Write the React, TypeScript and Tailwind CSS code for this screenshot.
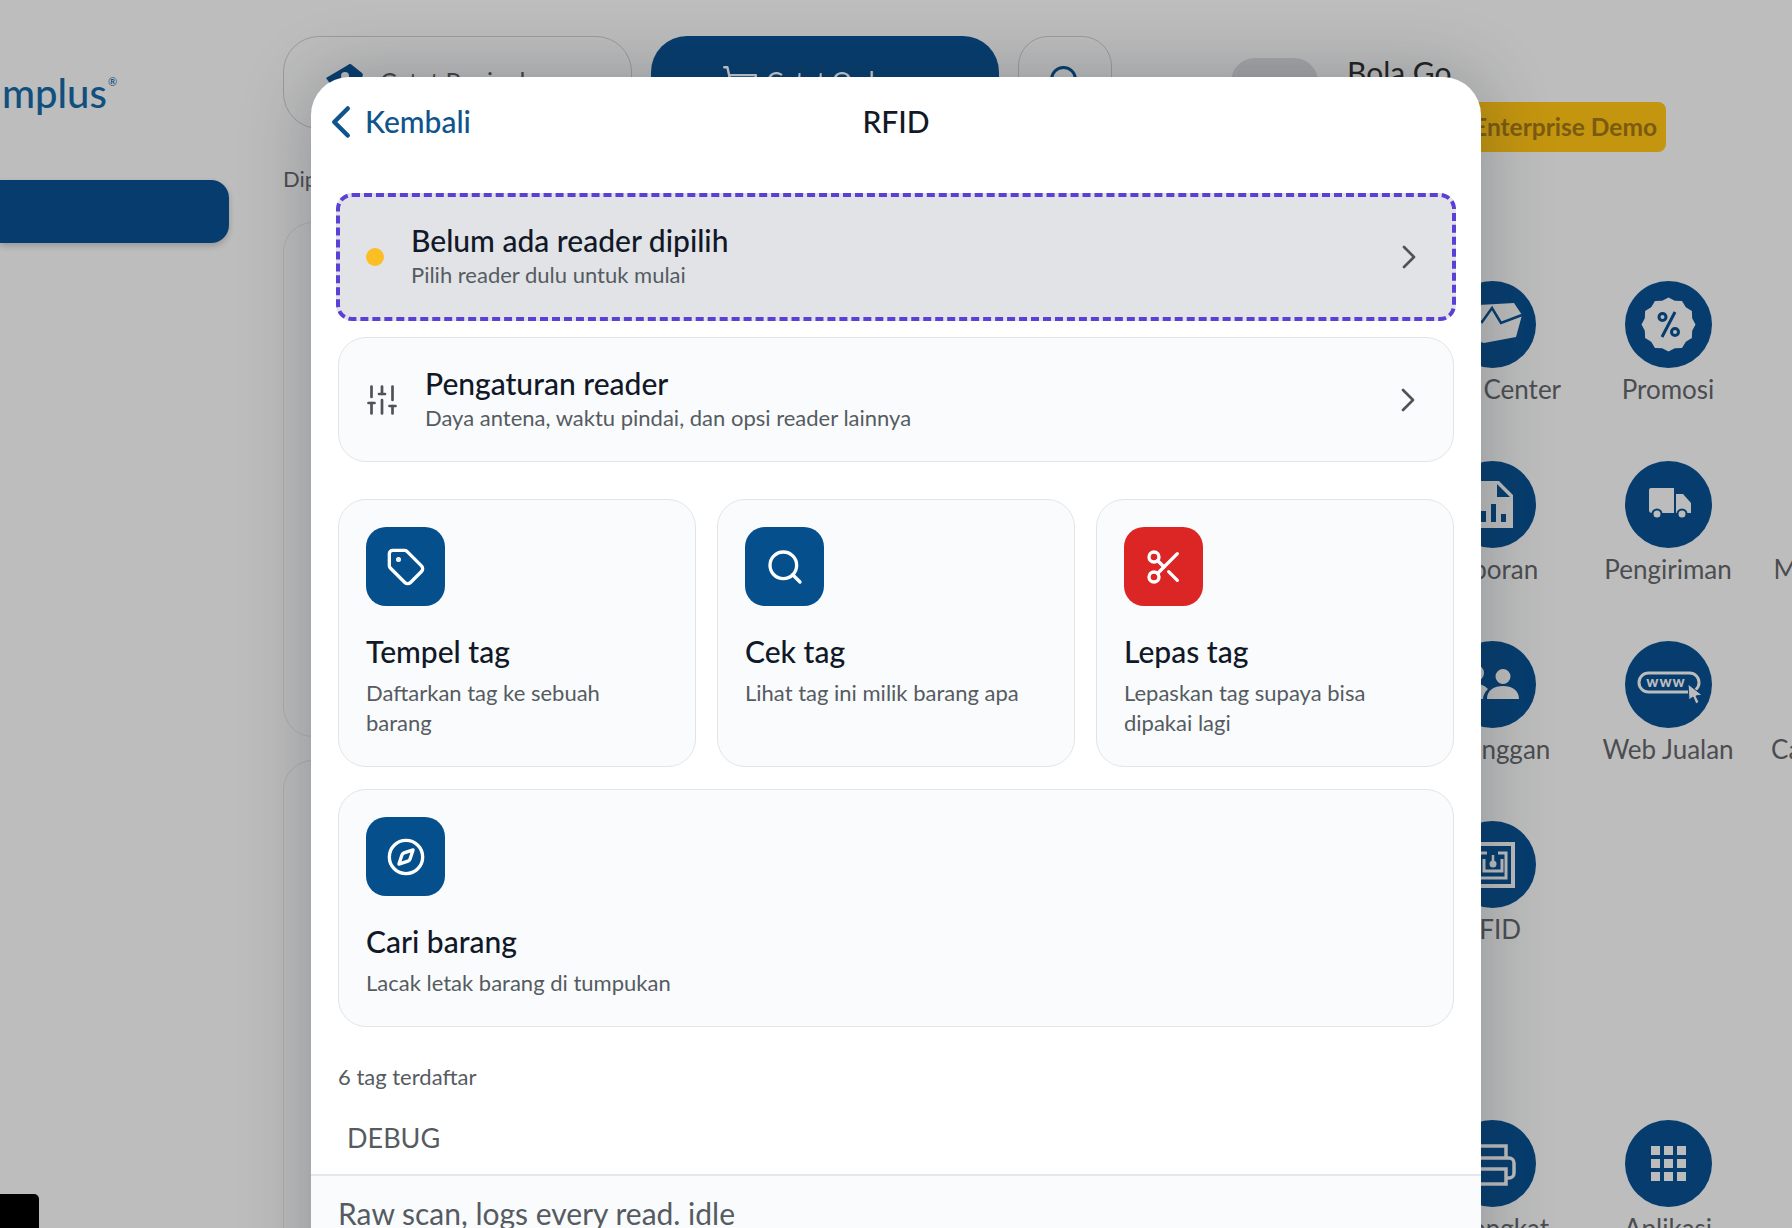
import { ChevronLeft, ChevronRight, Compass, Scissors, Search, ShoppingCart, SlidersVertical, Tag } from 'lucide-react'
import type { ReactNode } from 'react'

const badgePoints = Array.from({ length: 24 }, (_, i) => {
  const r = i % 2 ? 24.5 : 27
  const a = (i / 24) * Math.PI * 2
  return `${43.5 + r * Math.cos(a)},${43.5 + r * Math.sin(a)}`
}).join(' ')

function Disc({ children }: { children?: ReactNode }) {
  return (
    <svg viewBox="0 0 87 87" className="h-[87px] w-[87px] shrink-0">
      <circle cx="43.5" cy="43.5" r="43.5" fill="#063d6e" />
      {children}
    </svg>
  )
}

const ICONS: Record<string, ReactNode> = {
  center: (
    <>
      <path d="M12 25l53-3 8 12-6 22-32 6-21-6z" fill="#bcbcbc" />
      <path d="M10 34l23 7 10-14 9 15 21-8" fill="none" stroke="#063d6e" strokeWidth="2.5" />
    </>
  ),
  promo: (
    <>
      <polygon points={badgePoints} fill="#bcbcbc" />
      <circle cx="37.5" cy="36" r="3.5" fill="none" stroke="#063d6e" strokeWidth="3" />
      <circle cx="50" cy="51" r="3.5" fill="none" stroke="#063d6e" strokeWidth="3" />
      <path d="M50 31L37 56" stroke="#063d6e" strokeWidth="3" />
    </>
  ),
  report: (
    <path
      d="M22 20h28l14 14v33H22zM32 50v11h5V50zM42 43v18h5V43zM52 53v8h5v-8zM48 23v13h13z"
      fill="#bcbcbc"
      fillRule="evenodd"
    />
  ),
  truck: (
    <>
      <path d="M24 29a2 2 0 012-2h23v25H27a3 3 0 01-3-3zM51 33h7l8 9v10H51z" fill="#bcbcbc" />
      <circle cx="32" cy="53" r="4.500" fill="#bcbcbc" stroke="#063d6e" strokeWidth="2" />
      <circle cx="57" cy="53" r="4.500" fill="#bcbcbc" stroke="#063d6e" strokeWidth="2" />
    </>
  ),
  users: (
    <path
      d="M27 24a8 8 0 110 16 8 8 0 010-16zM54 28a7.500 7.500 0 110 15 7.500 7.500 0 010-15zM12 58c0-10 6-15 15-15 6 0 9 2 12 5-3 3-5 6-5 10zM38 58c0-9 7-13 16-13s16 4 16 13z"
      fill="#bcbcbc"
    />
  ),
  web: (
    <>
      <rect x="14" y="32" width="60" height="19" rx="9.500" fill="none" stroke="#bcbcbc" strokeWidth="3" />
      <text x="41" y="46" textAnchor="middle" fontSize="15" fontWeight="900" letterSpacing="1" fill="#bcbcbc" fontFamily="Lato, sans-serif">
        www
      </text>
      <path d="M63 43l14 11-6 1 3 6-3 2-3-7-4 3z" fill="#bcbcbc" stroke="#063d6e" strokeWidth="1" />
    </>
  ),
  rfid: (
    <>
      <rect x="17" y="23" width="47" height="42" fill="none" stroke="#bcbcbc" strokeWidth="4" />
      <path d="M38 32H24v25h33V32H49" fill="none" stroke="#bcbcbc" strokeWidth="3" />
      <path d="M35 38v12h18V38" fill="none" stroke="#bcbcbc" strokeWidth="3" />
      <circle cx="44" cy="43" r="3.500" fill="#bcbcbc" />
      <path d="M44 34v8" stroke="#bcbcbc" strokeWidth="2.500" />
    </>
  ),
  print: (
    <g fill="none" stroke="#bcbcbc" strokeWidth="3.500">
      <path d="M28 38V26h29v12" />
      <path d="M28 58h-7a5 5 0 01-5-5V43a5 5 0 015-5h39a5 5 0 015 5v10a5 5 0 01-5 5h-3" />
      <rect x="28" y="49" width="29" height="15" />
    </g>
  ),
  grid: (
    <path
      d="M26 26h9v9h-9zM39 26h9v9h-9zM52 26h9v9h-9zM26 39h9v9h-9zM39 39h9v9h-9zM52 39h9v9h-9zM26 52h9v9h-9zM39 52h9v9h-9zM52 52h9v9h-9z"
      fill="#bcbcbc"
    />
  ),
}

const APP_ROWS = [
  [
    { label: 'Help Center', icon: 'center' },
    { label: 'Promosi', icon: 'promo' },
    { label: '', icon: '' },
  ],
  [
    { label: 'Laporan', icon: 'report' },
    { label: 'Pengiriman', icon: 'truck' },
    { label: 'Marketplace', icon: '' },
  ],
  [
    { label: 'Pelanggan', icon: 'users' },
    { label: 'Web Jualan', icon: 'web' },
    { label: 'Cabang Toko', icon: '' },
  ],
  [
    { label: 'RFID', icon: 'rfid' },
    { label: '', icon: '' },
    { label: '', icon: '' },
  ],
]

const TOOL_CARDS = [
  { title: 'Tempel tag', desc: 'Daftarkan tag ke sebuah barang', icon: Tag, tile: 'bg-[#05508c]' },
  { title: 'Cek tag', desc: 'Lihat tag ini milik barang apa', icon: Search, tile: 'bg-[#05508c]' },
  { title: 'Lepas tag', desc: 'Lepaskan tag supaya bisa dipakai lagi', icon: Scissors, tile: 'bg-[#dc2626]' },
]

function AppCell({ label, icon }: { label: string; icon: string }) {
  return (
    <div className="flex w-[176px] shrink-0 flex-col items-center">
      {icon ? <Disc>{ICONS[icon]}</Disc> : <div className="h-[87px]" />}
      <span className="mt-[5px] whitespace-nowrap text-[26px] leading-[32px] text-[#4b4d50]">{label}</span>
    </div>
  )
}

function Backdrop() {
  return (
    <div className="flex h-full w-full">
      <aside className="flex w-[283px] shrink-0 flex-col">
        <div className="mt-[69px] flex h-[48px] items-center pl-[2px] text-[40px] font-medium leading-none text-[#11507e]">
          mplus<sup className="-mt-[12px] ml-[1px] text-[11px]">®</sup>
        </div>
        <div className="mt-[63px] h-[63px] w-[229px] rounded-r-[18px] bg-[#063d6e] shadow-[0_3px_6px_rgba(0,0,0,0.2)]" />
        <div className="mt-auto h-[34px] w-[39px] rounded-tr-[5px] bg-black" />
      </aside>

      <main className="flex w-[829px] shrink-0 flex-col pt-[36px]">
        <div className="flex shrink-0 gap-[19px]">
          <div className="flex h-[93px] w-[349px] items-start gap-[17px] rounded-[36px] border border-[#9b9b9d] pl-[42px] pt-[26px]">
            <svg viewBox="0 0 37 37" className="h-[37px] w-[37px] shrink-0">
              <path d="M0 15L22 2a3 3 0 014 0l10 8a3 3 0 010 4L14 34z" fill="#063d6e" />
              <circle cx="19" cy="13" r="4" fill="#bcbcbc" />
            </svg>
            <span className="pt-[2px] text-[25px] leading-[32px] text-[#444]">Catat Penjual</span>
          </div>
          <div className="flex h-[93px] w-[349px] items-start gap-[8px] rounded-[36px] bg-[#063d6e] pl-[70px] pt-[28px] text-[#c9ced4]">
            <ShoppingCart size={38} strokeWidth={1.5} />
            <span className="text-[25px] leading-[32px]">Catat Order</span>
          </div>
          <div className="flex h-[93px] w-[94px] items-start justify-center rounded-[30px] border border-[#9b9b9d] pt-[26px] text-[#063d6e]">
            <Search size={36} />
          </div>
        </div>
        <p className="mt-[36px] shrink-0 text-[22px] leading-[28px] text-[#4b4d50]">Dipilih</p>
        <div className="mt-[29px] h-[515px] shrink-0 rounded-[30px] border border-[#adadaf]" />
        <div className="mt-[23px] h-[500px] shrink-0 rounded-[30px] border border-[#adadaf]" />
      </main>

      <section className="flex min-w-0 flex-1 flex-col overflow-hidden pl-[119px]">
        <div className="mt-[58px] flex h-[44px] shrink-0 gap-[29px]">
          <div className="h-[80px] w-[87px] rounded-[24px] bg-[#a6a6a8]" />
          <span className="-mt-[4px] whitespace-nowrap text-[30px] leading-[36px] text-[#222]">Bola Go</span>
        </div>
        <div className="flex shrink-0 justify-end pr-[126px]">
          <span className="flex h-[50px] w-[300px] items-center justify-end rounded-[8px] bg-[#c4950f] px-[9px] text-[24.5px] font-bold text-[#7a5b10]">
            Enterprise Demo
          </span>
        </div>
        <div className="ml-[173px] mt-[129px] flex w-[528px] shrink-0 flex-col">
          {APP_ROWS.map((row, i) => (
            <div key={i} className="flex h-[180px] w-[528px] shrink-0">
              {row.map((app, j) => (
                <AppCell key={j} label={app.label} icon={app.icon} />
              ))}
            </div>
          ))}
          <div className="mt-[119px] flex w-[528px] shrink-0">
            <AppCell label="Perangkat" icon="print" />
            <AppCell label="Aplikasi" icon="grid" />
          </div>
        </div>
      </section>
    </div>
  )
}

function ToolCard({ title, desc, icon: Icon, tile, className }: { title: string; desc: string; icon: typeof Tag; tile: string; className: string }) {
  return (
    <div className={`rounded-[28px] border border-[#e2e5e8] bg-[#f9fbfc] px-[27px] pt-[27px] ${className}`}>
      <div className={`flex h-[79px] w-[79px] items-center justify-center rounded-[20px] text-white ${tile}`}>
        <Icon size={40} strokeWidth={2} />
      </div>
      <div className="mt-[27px] text-[30px] font-medium leading-[36px] text-[#111827]">{title}</div>
      <p className="mt-[9px] pr-[20px] text-[22px] leading-[30px] text-[#565b62]">{desc}</p>
    </div>
  )
}

export default function App() {
  return (
    <div className="relative h-[1228px] w-[1792px] overflow-hidden bg-[#bdbdbd] font-['Lato','Liberation_Sans',sans-serif]">
      <Backdrop />

      <div className="absolute left-[311px] top-[77px] h-[1250px] w-[1170px] rounded-t-[38px] bg-white shadow-[0_0_70px_rgba(30,35,45,0.28)]">
        <header className="relative flex h-[90px] items-center justify-center">
          <span className="absolute left-[3px] flex items-center text-[30px] font-medium text-[#0f548c]">
            <ChevronLeft size={54} strokeWidth={2} />
            <span className="-ml-[3px] -mt-[2px]">Kembali</span>
          </span>
          <h1 className="-mt-[2px] text-[30px] font-medium text-[#111827]">RFID</h1>
        </header>

        <div className="mt-[26px] flex flex-col px-[27px]">
          <button
            type="button"
            className="-mx-[2px] flex h-[128px] items-center rounded-[16px] border-[4px] border-dashed border-[#5b3fd6] bg-[#e1e3e6] pl-[26px] pr-[23px] text-left"
          >
            <span className="h-[18px] w-[18px] rounded-full bg-[#fbbf24]" />
            <span className="ml-[27px] flex-1 pb-[2px]">
              <span className="mb-[2px] block text-[30px] font-medium leading-[36px] text-[#111827]">Belum ada reader dipilih</span>
              <span className="block text-[22px] leading-[30px] text-[#565b62]">Pilih reader dulu untuk mulai</span>
            </span>
            <ChevronRight size={40} strokeWidth={1.6} className="text-[#4f5358]" />
          </button>

          <button
            type="button"
            className="mt-[16px] flex h-[125px] items-center rounded-[28px] border border-[#e2e5e8] bg-[#f9fbfc] pl-[25px] pr-[25px] text-left"
          >
            <SlidersVertical size={36} strokeWidth={1.8} className="text-[#4f5358]" />
            <span className="ml-[25px] flex-1 pb-[2px]">
              <span className="mb-[2px] block text-[30px] font-medium leading-[36px] text-[#111827]">Pengaturan reader</span>
              <span className="block text-[22px] leading-[30px] text-[#565b62]">Daya antena, waktu pindai, dan opsi reader lainnya</span>
            </span>
            <ChevronRight size={40} strokeWidth={1.6} className="text-[#4f5358]" />
          </button>

          <div className="mt-[37px] grid grid-cols-3 gap-x-[21px] gap-y-[22px]">
            {TOOL_CARDS.map((card) => (
              <ToolCard key={card.title} {...card} className="h-[268px]" />
            ))}
            <ToolCard
              title="Cari barang"
              desc="Lacak letak barang di tumpukan"
              icon={Compass}
              tile="bg-[#05508c]"
              className="col-span-3 h-[238px]"
            />
          </div>

          <p className="mt-[35px] text-[22px] leading-[30px] text-[#565b62]">6 tag terdaftar</p>
          <p className="mt-[28px] pl-[9px] text-[27px] leading-[36px] text-[#565b62]">DEBUG</p>
        </div>

        <div className="mt-[18px] h-[300px] border-t-2 border-[#e5e7eb] bg-[#f9fbfc] px-[27px] pt-[18px] text-[30px] leading-[38px] text-[#565b62]">
          Raw scan, logs every read. idle
        </div>
      </div>
    </div>
  )
}
